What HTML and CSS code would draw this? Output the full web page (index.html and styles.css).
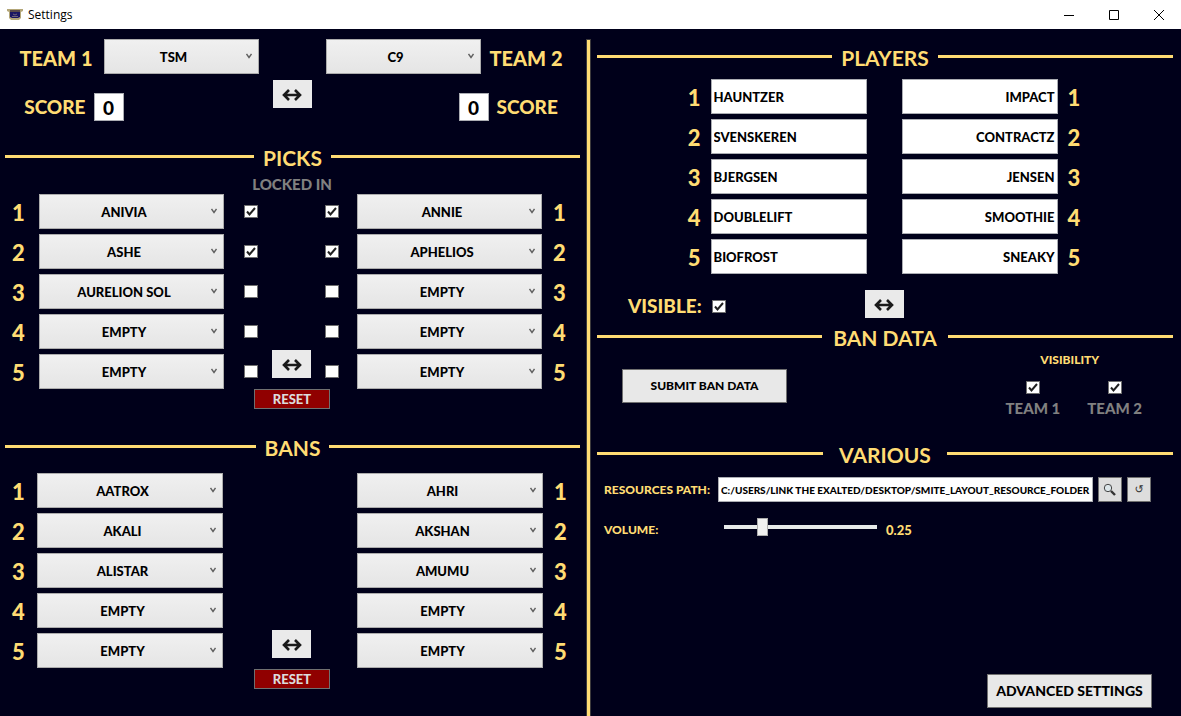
FILE: index.html
```html
<!DOCTYPE html>
<html lang="en">
<head>
<meta charset="utf-8">
<title>Settings</title>
<link rel="stylesheet" href="styles.css">
</head>
<body>
<svg class="defs" aria-hidden="true">
  <symbol id="swap" viewBox="0 0 20 14"><path d="M2 7H18M7 2L2 7L7 12M13 2L18 7L13 12" fill="none" stroke="#1a1a1a" stroke-width="2.6"/></symbol>
</svg>

<header class="titlebar">
  <svg class="app-icon" viewBox="0 0 16 12" aria-hidden="true">
    <path d="M0 0H16V2L14 3V9L12 11H4L2 9V3L0 2Z" fill="#b3a678"/>
    <path d="M3 1H13V3H3Z" fill="#5a4b4a"/>
    <path d="M3 3H13V8L11 9H5L3 8Z" fill="#1b1763"/>
    <path d="M6 5L8 6L10 5M5 7.500H11" fill="none" stroke="#6f6478"/>
  </svg>
  <span class="window-title">Settings</span>
  <div class="window-buttons">
    <button type="button" aria-label="Minimize"><svg viewBox="0 0 12 12"><path d="M1 6.5H11"/></svg></button>
    <button type="button" aria-label="Maximize"><svg viewBox="0 0 12 12"><path d="M1.5 1.5H10.5V10.5H1.5Z"/></svg></button>
    <button type="button" aria-label="Close"><svg viewBox="0 0 12 12"><path d="M1 1L11 11M11 1L1 11"/></svg></button>
  </div>
</header>

<main class="panels">
  <div class="panel panel-left">
    <section class="teams">
      <div class="team">
        <div class="team-row"><label class="team-name" for="team1">TEAM 1</label><select id="team1"><option>TSM</option></select></div>
        <div class="score-row"><label for="score1">SCORE</label><input id="score1" class="score" type="text" value="0"></div>
      </div>
      <button class="swap" type="button" aria-label="Swap teams"><svg><use href="#swap"/></svg></button>
      <div class="team team-right">
        <div class="team-row"><select id="team2"><option>C9</option></select><label class="team-name" for="team2">TEAM 2</label></div>
        <div class="score-row"><input id="score2" class="score" type="text" value="0"><label for="score2">SCORE</label></div>
      </div>
    </section>

    <section class="picks">
      <h2 class="heading">PICKS</h2>
      <p class="locked">LOCKED IN</p>
      <div class="draft">
        <ol class="slots">
          <li><label for="p11">1</label><select id="p11"><option>ANIVIA</option></select><input type="checkbox" aria-label="Team 1 pick 1 locked in" checked></li>
          <li><label for="p12">2</label><select id="p12"><option>ASHE</option></select><input type="checkbox" aria-label="Team 1 pick 2 locked in" checked></li>
          <li><label for="p13">3</label><select id="p13"><option>AURELION SOL</option></select><input type="checkbox" aria-label="Team 1 pick 3 locked in"></li>
          <li><label for="p14">4</label><select id="p14"><option>EMPTY</option></select><input type="checkbox" aria-label="Team 1 pick 4 locked in"></li>
          <li><label for="p15">5</label><select id="p15"><option>EMPTY</option></select><input type="checkbox" aria-label="Team 1 pick 5 locked in"></li>
        </ol>
        <button class="swap" type="button" aria-label="Swap picks"><svg><use href="#swap"/></svg></button>
        <ol class="slots slots-right">
          <li><input type="checkbox" aria-label="Team 2 pick 1 locked in" checked><select id="p21"><option>ANNIE</option></select><label for="p21">1</label></li>
          <li><input type="checkbox" aria-label="Team 2 pick 2 locked in" checked><select id="p22"><option>APHELIOS</option></select><label for="p22">2</label></li>
          <li><input type="checkbox" aria-label="Team 2 pick 3 locked in"><select id="p23"><option>EMPTY</option></select><label for="p23">3</label></li>
          <li><input type="checkbox" aria-label="Team 2 pick 4 locked in"><select id="p24"><option>EMPTY</option></select><label for="p24">4</label></li>
          <li><input type="checkbox" aria-label="Team 2 pick 5 locked in"><select id="p25"><option>EMPTY</option></select><label for="p25">5</label></li>
        </ol>
      </div>
      <button class="reset" type="button">RESET</button>
    </section>

    <section class="bans">
      <h2 class="heading">BANS</h2>
      <div class="draft">
        <ol class="slots">
          <li><label for="b11">1</label><select id="b11"><option>AATROX</option></select></li>
          <li><label for="b12">2</label><select id="b12"><option>AKALI</option></select></li>
          <li><label for="b13">3</label><select id="b13"><option>ALISTAR</option></select></li>
          <li><label for="b14">4</label><select id="b14"><option>EMPTY</option></select></li>
          <li><label for="b15">5</label><select id="b15"><option>EMPTY</option></select></li>
        </ol>
        <button class="swap" type="button" aria-label="Swap bans"><svg><use href="#swap"/></svg></button>
        <ol class="slots slots-right">
          <li><select id="b21"><option>AHRI</option></select><label for="b21">1</label></li>
          <li><select id="b22"><option>AKSHAN</option></select><label for="b22">2</label></li>
          <li><select id="b23"><option>AMUMU</option></select><label for="b23">3</label></li>
          <li><select id="b24"><option>EMPTY</option></select><label for="b24">4</label></li>
          <li><select id="b25"><option>EMPTY</option></select><label for="b25">5</label></li>
        </ol>
      </div>
      <button class="reset" type="button">RESET</button>
    </section>
  </div>

  <div class="divider"></div>

  <div class="panel panel-right">
    <section class="players">
      <h2 class="heading">PLAYERS</h2>
      <div class="roster">
        <ol class="names">
          <li><label for="n11">1</label><input id="n11" type="text" value="HAUNTZER"></li>
          <li><label for="n12">2</label><input id="n12" type="text" value="SVENSKEREN"></li>
          <li><label for="n13">3</label><input id="n13" type="text" value="BJERGSEN"></li>
          <li><label for="n14">4</label><input id="n14" type="text" value="DOUBLELIFT"></li>
          <li><label for="n15">5</label><input id="n15" type="text" value="BIOFROST"></li>
        </ol>
        <ol class="names names-right">
          <li><input id="n21" type="text" value="IMPACT"><label for="n21">1</label></li>
          <li><input id="n22" type="text" value="CONTRACTZ"><label for="n22">2</label></li>
          <li><input id="n23" type="text" value="JENSEN"><label for="n23">3</label></li>
          <li><input id="n24" type="text" value="SMOOTHIE"><label for="n24">4</label></li>
          <li><input id="n25" type="text" value="SNEAKY"><label for="n25">5</label></li>
        </ol>
      </div>
      <div class="players-footer">
        <div class="visible"><label for="visible">VISIBLE:</label><input id="visible" type="checkbox" checked></div>
        <button class="swap" type="button" aria-label="Swap players"><svg><use href="#swap"/></svg></button>
      </div>
    </section>

    <section class="ban-data">
      <h2 class="heading">BAN DATA</h2>
      <div class="ban-data-body">
        <button class="button" type="button">SUBMIT BAN DATA</button>
        <fieldset class="visibility">
          <legend>VISIBILITY</legend>
          <label><input type="checkbox" checked>TEAM 1</label>
          <label><input type="checkbox" checked>TEAM 2</label>
        </fieldset>
      </div>
    </section>

    <section class="various">
      <h2 class="heading">VARIOUS</h2>
      <div class="path-row">
        <label for="path">RESOURCES PATH:</label>
        <input id="path" type="text" value="C:/USERS/LINK THE EXALTED/DESKTOP/SMITE_LAYOUT_RESOURCE_FOLDER">
        <button class="tool" type="button" aria-label="Browse"><svg viewBox="0 0 14 14"><circle cx="5" cy="5" r="3.7" fill="#dce6ea" stroke="#444"/><path d="M8 8L12 12" stroke="#333" stroke-width="2.4"/></svg></button>
        <button class="tool" type="button" aria-label="Reset path">↺</button>
      </div>
      <div class="volume-row">
        <label for="volume">VOLUME:</label>
        <input id="volume" type="range" min="0" max="1" step="0.01" value="0.23">
        <output for="volume">0.25</output>
      </div>
    </section>
    <button class="button advanced" type="button">ADVANCED SETTINGS</button>
  </div>
</main>
</body>
</html>
```
FILE: styles.css
```css
:root {
  --gold: #ffdc73;
  --night: #00001a;
  --grey: #808080;
  --face: #e8e8e8;
}

* { box-sizing: border-box; }

body {
  margin: 0;
  min-height: 100vh;
  display: flex;
  flex-direction: column;
  background: var(--night);
  color: var(--gold);
  font: 900 22px/24px Lato, "Open Sans", sans-serif;
}

h2, p, ol, fieldset { margin: 0; padding: 0; border: 0; }
ol { list-style: none; }
label { white-space: nowrap; }
button, input, select {
  margin: 0;
  padding: 0;
  border-radius: 0;
  font: inherit;
}
.defs { display: none; }

/* Title bar */
.titlebar {
  height: 29px;
  padding-left: 7px;
  display: flex;
  align-items: center;
  gap: 5px;
  background: #fff;
  color: #000;
  font: 400 12px/16px "Open Sans", sans-serif;
}
.app-icon { width: 16px; height: 12px; }
.window-title { flex: 1; }
.window-buttons { display: flex; }
.window-buttons button {
  width: 45px;
  height: 28px;
  border: 0;
  background: none;
  display: grid;
  place-items: center;
}
.window-buttons svg { width: 12px; height: 12px; fill: none; stroke: #000; }

/* Panels */
.panels {
  flex: 1;
  display: grid;
  grid-template-columns: minmax(0, 586fr) 5px minmax(0, 590fr);
  padding-top: 10px;
}
.divider {
  border: solid #3d3a3c;
  border-width: 1px 1px 0;
  background: var(--gold);
}
.panel { display: flex; flex-direction: column; }

.heading {
  display: flex;
  align-items: center;
  gap: 9px;
  padding: 0 4px 0 5px;
  font-size: 21px;
  line-height: 24px;
}
.heading::before, .heading::after {
  content: "";
  flex: 1;
  height: 3px;
  margin-bottom: 4px;
  background: var(--gold);
}

/* Shared controls */
select {
  appearance: none;
  height: 35px;
  padding-right: 15px;
  border: 1px solid #acacac;
  background: url("data:image/svg+xml,%3Csvg xmlns='http://www.w3.org/2000/svg' width='6' height='6'%3E%3Cpath d='M.5 1L3 4.5L5.500 1' fill='none' stroke='%23606060' stroke-width='1.4'/%3E%3C/svg%3E") right 6px top 13px no-repeat, linear-gradient(#f0f0f0, #e5e5e5);
  color: #000;
  font-size: 13px;
  text-align: center;
  text-align-last: center;
}
input[type="text"] {
  min-width: 0;
  border: 1px solid #abadb3;
  background: #fff;
  color: #000;
}
input[type="checkbox"] {
  appearance: none;
  width: 14px;
  height: 13px;
  border: 1px solid #707070;
  background: #fff;
}
input[type="checkbox"]:checked {
  background: #fff url("data:image/svg+xml,%3Csvg xmlns='http://www.w3.org/2000/svg' width='12' height='11'%3E%3Cpath d='M2 5.500L4.500 8.500L10 2' fill='none' stroke='%23212121' stroke-width='2'/%3E%3C/svg%3E") center no-repeat;
}
.swap {
  width: 39px;
  height: 28px;
  border: 0;
  background: #eaeaea;
  display: grid;
  place-items: center;
}
.swap svg { width: 20px; height: 14px; margin-top: 2px; }
.reset {
  display: block;
  width: 76px;
  height: 20px;
  margin: 0 auto;
  border: 1px solid #707070;
  background: #900000;
  color: #dcdcdc;
  font-size: 13px;
  line-height: 18px;
}
.button {
  width: 165px;
  height: 34px;
  border: 1px solid #707070;
  background: var(--face);
  color: #000;
  font-size: 12px;
}

/* Teams */
.teams {
  display: flex;
  justify-content: center;
  gap: 14px;
  padding-right: 2px;
}
.teams .swap { margin-top: 41px; }
.team { display: flex; flex-direction: column; gap: 19px; }
.team-row { display: flex; align-items: center; font-size: 20px; }
.team-row select { width: 155px; }
.team-name { width: 84px; padding-top: 3px; }
.team-right .team-name { padding-left: 9px; }
.score-row {
  display: flex;
  align-items: center;
  justify-content: flex-end;
  gap: 8px;
  width: 104px;
  font-size: 19px;
}
.team-right .score-row { align-self: flex-end; justify-content: flex-start; width: 106px; }
.score { width: 30px; height: 28px; text-align: center; }

/* Picks and bans */
.picks, .bans { padding-right: 2px; }
.picks { margin-top: 25px; }
.locked {
  color: var(--grey);
  font-size: 15px;
  line-height: 20px;
  text-align: center;
  padding-top: 4px;
}
.draft {
  display: grid;
  grid-template-columns: minmax(0, 260fr) 39px minmax(0, 263fr);
  padding: 0 10px 0 12px;
}
.draft .swap { align-self: end; margin-bottom: 11px; }
.slots, .names { display: grid; gap: 5px; }
.slots li { display: grid; align-items: center; }
.picks .slots li { grid-template-columns: 27px minmax(0, 1fr) 34px; }
.picks .slots-right li { grid-template-columns: 32px minmax(0, 1fr) 32px; }
.picks .slots li input { justify-self: end; }
.picks .slots-right li input { justify-self: start; }
.picks .slots { padding-right: 14px; }
.picks .slots-right { padding: 0 0 0 14px; }
.bans { margin-top: 27px; }
.bans .draft { margin-top: 13px; }
.bans .draft .swap { margin-bottom: 10px; }
.bans .reset { margin-top: 1px; }
.bans .slots li { grid-template-columns: 25px minmax(0, 1fr); padding-right: 49px; }
.bans .slots-right li { grid-template-columns: minmax(0, 1fr) 31px; padding: 0 0 0 46px; }
.slots label { padding-top: 2px; }
.slots-right label { padding-left: 11px; }

/* Players */
.panel-right .heading { padding: 0 8px 0 6px; }
.players { padding-top: 7px; }
.roster { display: flex; justify-content: center; gap: 35px; margin-top: 9px; padding-right: 4px; }
.names li { display: grid; grid-template-columns: 30px 156px; align-items: center; }
.names label { padding: 2px 10px 0 0; text-align: right; }
.names input[type="text"] { height: 35px; padding: 0 2px; font-size: 13px; }
.names-right li { grid-template-columns: 156px 30px; }
.names-right label { padding: 2px 0 0 10px; text-align: left; }
.names-right input { text-align: right; }
.players-footer {
  display: grid;
  grid-template-columns: minmax(0, 1fr) 39px minmax(0, 1fr);
  margin-top: 16px;
  padding-right: 4px;
}
.visible {
  display: flex;
  align-items: center;
  gap: 10px;
  padding: 4px 0 0 37px;
  font-size: 19px;
}

/* Ban data */
.ban-data { margin-top: 8px; }
.ban-data .heading { gap: 11px; }
.ban-data-body {
  display: flex;
  justify-content: space-between;
  align-items: flex-start;
  padding: 0 39px 0 31px;
}
.ban-data-body .button { margin-top: 19px; }
.visibility {
  display: flex;
  gap: 27px;
  color: var(--grey);
  font-size: 15px;
  line-height: 20px;
}
.visibility legend {
  margin: 7px auto 0;
  padding: 0 8px 0 0;
  color: var(--gold);
  font-size: 12px;
}
.visibility label { display: grid; justify-items: center; gap: 4px; padding-top: 11px; }

/* Various */
.various { margin-top: 25px; font-size: 12px; }
.various .heading { gap: 16px; }
.path-row { display: flex; align-items: center; gap: 5px; padding: 0 30px 0 13px; margin-top: 10px; }
.path-row label { width: 109px; }
.path-row input[type="text"] { flex: 1; height: 25px; padding-left: 2px; font-size: 10px; }
.tool {
  width: 24px;
  height: 25px;
  border: 1px solid #707070;
  background: #ddd;
  color: #333;
  display: grid;
  place-items: center;
  font: 400 11px/16px "DejaVu Sans", sans-serif;
}
.tool svg { width: 14px; height: 14px; }
.volume-row { display: flex; align-items: center; padding-left: 13px; margin-top: 9px; }
.volume-row label { width: 120px; padding-top: 7px; }
.volume-row output { padding: 7px 0 0 9px; font-size: 13px; }
input[type="range"] { appearance: none; width: 153px; height: 18px; background: none; }
input[type="range"]::-webkit-slider-runnable-track { height: 4px; background: #e7eaea; }
input[type="range"]::-webkit-slider-thumb {
  appearance: none;
  width: 11px;
  height: 18px;
  margin-top: -7px;
  border: 1px solid #acacac;
  background: #f0f0f0;
}
.advanced { margin: auto 29px 8px auto; font-size: 14px; white-space: nowrap; }
```
